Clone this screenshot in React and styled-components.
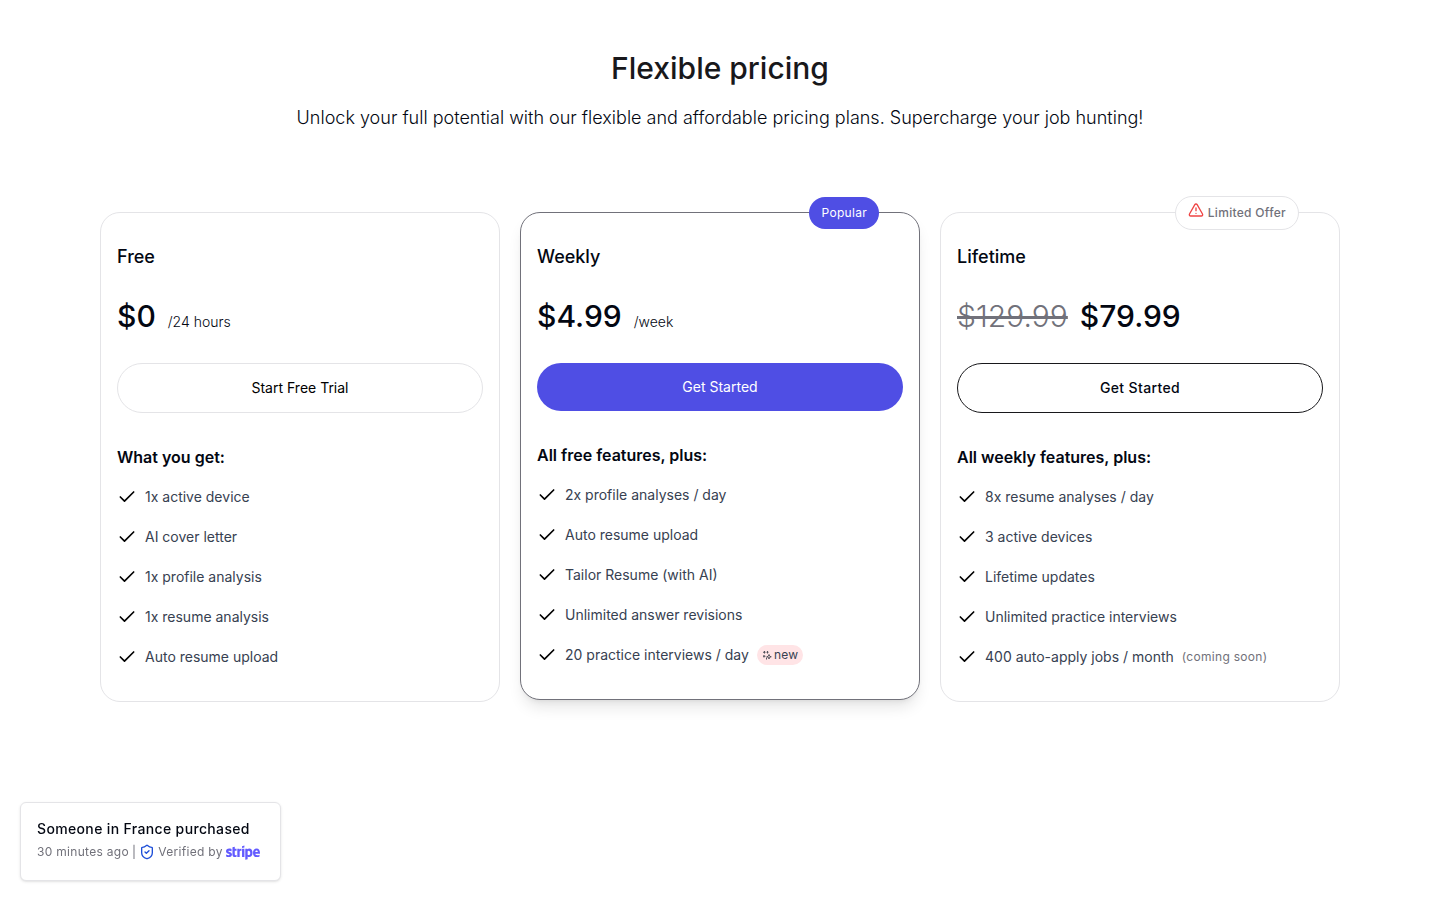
import React from "react";
import styled, { createGlobalStyle, css } from "styled-components";
import { FaStripe } from "react-icons/fa";
import { Check, ShieldCheck, TriangleAlert } from "lucide-react";

const GlobalStyle = createGlobalStyle`
  *, *::before, *::after { box-sizing: border-box; }
  body {
    margin: 0;
    background: #fff;
    color: #030712;
    font-family: Inter, "Liberation Sans", sans-serif;
    font-size: 16px;
    line-height: 24px;
  }
  h1, h2, h3, p, ul { margin: 0; padding: 0; }
  ul { list-style: none; }
`;

const Page = styled.main`
  padding: 48px 20px 120px;
`;

const Header = styled.header`
  display: flex;
  flex-direction: column;
  align-items: center;
  gap: 16px;
  text-align: center;
`;

const Title = styled.h1`
  font-size: 30px;
  line-height: 40px;
  font-weight: 500;
  color: #18181b;
`;

const Subtitle = styled.p`
  font-size: 18px;
  line-height: 28px;
  font-weight: 300;
`;

const Plans = styled.section`
  display: grid;
  grid-template-columns: repeat(3, minmax(0, 1fr));
  align-items: start;
  gap: 20px;
  max-width: 1240px;
  margin: 80px auto 0;

  @media (max-width: 900px) {
    grid-template-columns: minmax(0, 1fr);
    gap: 40px;
  }
`;

const Card = styled.article`
  position: relative;
  padding: 30px 16px 34px;
  border: 1px solid ${(p) => (p.$featured ? "#71717a" : "#e4e4e7")};
  border-radius: 20px;
  background: #fff;
  box-shadow: ${(p) =>
    p.$featured
      ? "0 10px 15px -3px rgba(0, 0, 0, 0.1), 0 4px 6px -4px rgba(0, 0, 0, 0.1)"
      : "none"};
`;

const Badge = styled.div`
  position: absolute;
  top: 0;
  right: 40px;
  transform: translateY(-50%);
  display: flex;
  gap: 4px;
  padding: 8px 12px;
  border-radius: 17px;
  font-size: 12px;
  line-height: 16px;
  letter-spacing: 0.025em;
  ${(p) =>
    p.$tone === "solid"
      ? css`
          background: #4f4ee4;
          color: #fff;
        `
      : css`
          border: 1px solid #e4e4e7;
          background: #fff;
          color: #71717a;
          font-weight: 500;
        `}
`;

const AlertIcon = styled(TriangleAlert)`
  width: 16px;
  height: 16px;
  margin-top: -3px;
  color: #ef4444;
`;

const PlanName = styled.h2`
  font-size: 18px;
  line-height: 28px;
  font-weight: 500;
`;

const PriceRow = styled.p`
  display: flex;
  align-items: baseline;
  gap: 12px;
  margin-top: 27px;
  font-size: 30px;
  line-height: 36px;
`;

const Price = styled.span`
  font-weight: 500;
`;

const OldPrice = styled.s`
  font-weight: 300;
  color: #71717a;
`;

const Period = styled.span`
  font-size: 14px;
  line-height: 20px;
  font-weight: 300;
`;

const ActionButton = styled.button`
  display: block;
  width: 100%;
  margin-top: 29px;
  padding: 14px 20px;
  border-radius: 25px;
  font: 400 14px/20px Inter, "Liberation Sans", sans-serif;
  cursor: pointer;
  ${(p) =>
    ({
      plain: css`
        border: 1px solid #e4e4e7;
        background: #fff;
        color: #000;
      `,
      solid: css`
        border: 0;
        background: #4f4ee4;
        color: #fff;
      `,
      outline: css`
        border: 1px solid #18181b;
        background: #fff;
        color: #030712;
        font-weight: 500;
        letter-spacing: 0.025em;
      `,
    })[p.$variant]}
`;

const FeatureTitle = styled.h3`
  margin-top: 32px;
  font-size: 16px;
  line-height: 24px;
  font-weight: 600;
`;

const Features = styled.ul`
  display: grid;
  gap: 20px;
  margin-top: 18px;
`;

const Feature = styled.li`
  display: flex;
  align-items: center;
  gap: 8px;
  font-size: 14px;
  line-height: 20px;
  color: #374151;
`;

const CheckIcon = styled(Check)`
  flex: none;
  width: 20px;
  height: 20px;
  color: #000;
`;

const NewTag = styled.span`
  display: inline-flex;
  align-items: center;
  gap: 2px;
  padding: 2px 5px;
  border-radius: 10px;
  background: #ffe4e6;
  font-size: 12px;
  line-height: 16px;
  letter-spacing: 0.025em;
`;

const Soon = styled.span`
  font-size: 12px;
  line-height: 16px;
  letter-spacing: 0.025em;
  color: #71717a;
`;

const Toast = styled.aside`
  position: fixed;
  left: 20px;
  bottom: 19px;
  padding: 16px 20px 16px 16px;
  border: 1px solid #e4e4e7;
  border-radius: 6px;
  background: #fff;
  box-shadow: 0 1px 3px rgba(0, 0, 0, 0.1), 0 1px 2px -1px rgba(0, 0, 0, 0.1);
`;

const ToastTitle = styled.p`
  font-size: 14px;
  line-height: 20px;
  font-weight: 500;
  letter-spacing: 0.025em;
`;

const ToastMeta = styled.p`
  display: flex;
  align-items: center;
  gap: 3px;
  margin-top: 5px;
  padding-bottom: 4px;
  font-size: 12px;
  line-height: 16px;
  letter-spacing: 0.025em;
  color: #71717a;
`;

const ShieldIcon = styled(ShieldCheck)`
  width: 16px;
  height: 16px;
  color: #1d4ed8;
`;

const StripeLogo = styled(FaStripe)`
  width: 34px;
  height: 16px;
  color: #635bff;
`;

function SparkIcon() {
  return (
    <svg width="10" height="10" viewBox="0 0 20 20" fill="none" stroke="#52525b" strokeWidth="2" strokeLinejoin="round" aria-hidden="true">
      <path d="M14 9l1.200 3.300L18.500 13.500l-3.300 1.200L14 18l-1.200-3.300L9.500 13.500l3.300-1.200z" />
      <path d="M5 2v5M2 4.500h5M11 2v5M9 4.500h4M4 10v5M2 12.500h5M9 15v4" />
    </svg>
  );
}

const plans = [
  {
    name: "Free",
    price: "$0",
    period: "/24 hours",
    action: "Start Free Trial",
    variant: "plain",
    heading: "What you get:",
    features: ["1x active device", "AI cover letter", "1x profile analysis", "1x resume analysis", "Auto resume upload"],
  },
  {
    name: "Weekly",
    price: "$4.99",
    period: "/week",
    action: "Get Started",
    variant: "solid",
    featured: true,
    heading: "All free features, plus:",
    features: [
      "2x profile analyses / day",
      "Auto resume upload",
      "Tailor Resume (with AI)",
      "Unlimited answer revisions",
      "20 practice interviews / day",
    ],
    isNew: true,
  },
  {
    name: "Lifetime",
    oldPrice: "$129.99",
    price: "$79.99",
    action: "Get Started",
    variant: "outline",
    limited: true,
    heading: "All weekly features, plus:",
    features: [
      "8x resume analyses / day",
      "3 active devices",
      "Lifetime updates",
      "Unlimited practice interviews",
      "400 auto-apply jobs / month",
    ],
    soon: true,
  },
];

function PlanCard({ plan }) {
  const last = plan.features.length - 1;
  return (
    <Card $featured={plan.featured}>
      {plan.featured && <Badge $tone="solid">Popular</Badge>}
      {plan.limited && (
        <Badge>
          <AlertIcon aria-hidden="true" />
          Limited Offer
        </Badge>
      )}
      <PlanName>{plan.name}</PlanName>
      <PriceRow>
        {plan.oldPrice && <OldPrice>{plan.oldPrice}</OldPrice>}
        <Price>{plan.price}</Price>
        {plan.period && <Period>{plan.period}</Period>}
      </PriceRow>
      <ActionButton type="button" $variant={plan.variant}>
        {plan.action}
      </ActionButton>
      <FeatureTitle>{plan.heading}</FeatureTitle>
      <Features>
        {plan.features.map((feature, i) => (
          <Feature key={feature}>
            <CheckIcon aria-hidden="true" />
            <span>{feature}</span>
            {plan.isNew && i === last && (
              <NewTag>
                <SparkIcon />
                new
              </NewTag>
            )}
            {plan.soon && i === last && <Soon>(coming soon)</Soon>}
          </Feature>
        ))}
      </Features>
    </Card>
  );
}

export default function App() {
  return (
    <>
      <GlobalStyle />
      <Page>
        <Header>
          <Title>Flexible pricing</Title>
          <Subtitle>
            Unlock your full potential with our flexible and affordable pricing plans. Supercharge your job hunting!
          </Subtitle>
        </Header>
        <Plans>
          {plans.map((plan) => (
            <PlanCard key={plan.name} plan={plan} />
          ))}
        </Plans>
      </Page>
      <Toast role="status">
        <ToastTitle>Someone in France purchased</ToastTitle>
        <ToastMeta>
          <span>30 minutes ago</span>
          <span>|</span>
          <ShieldIcon aria-hidden="true" />
          <span>Verified by</span>
          <StripeLogo viewBox="0 94 640 300" role="img" aria-label="Stripe" />
        </ToastMeta>
      </Toast>
    </>
  );
}
